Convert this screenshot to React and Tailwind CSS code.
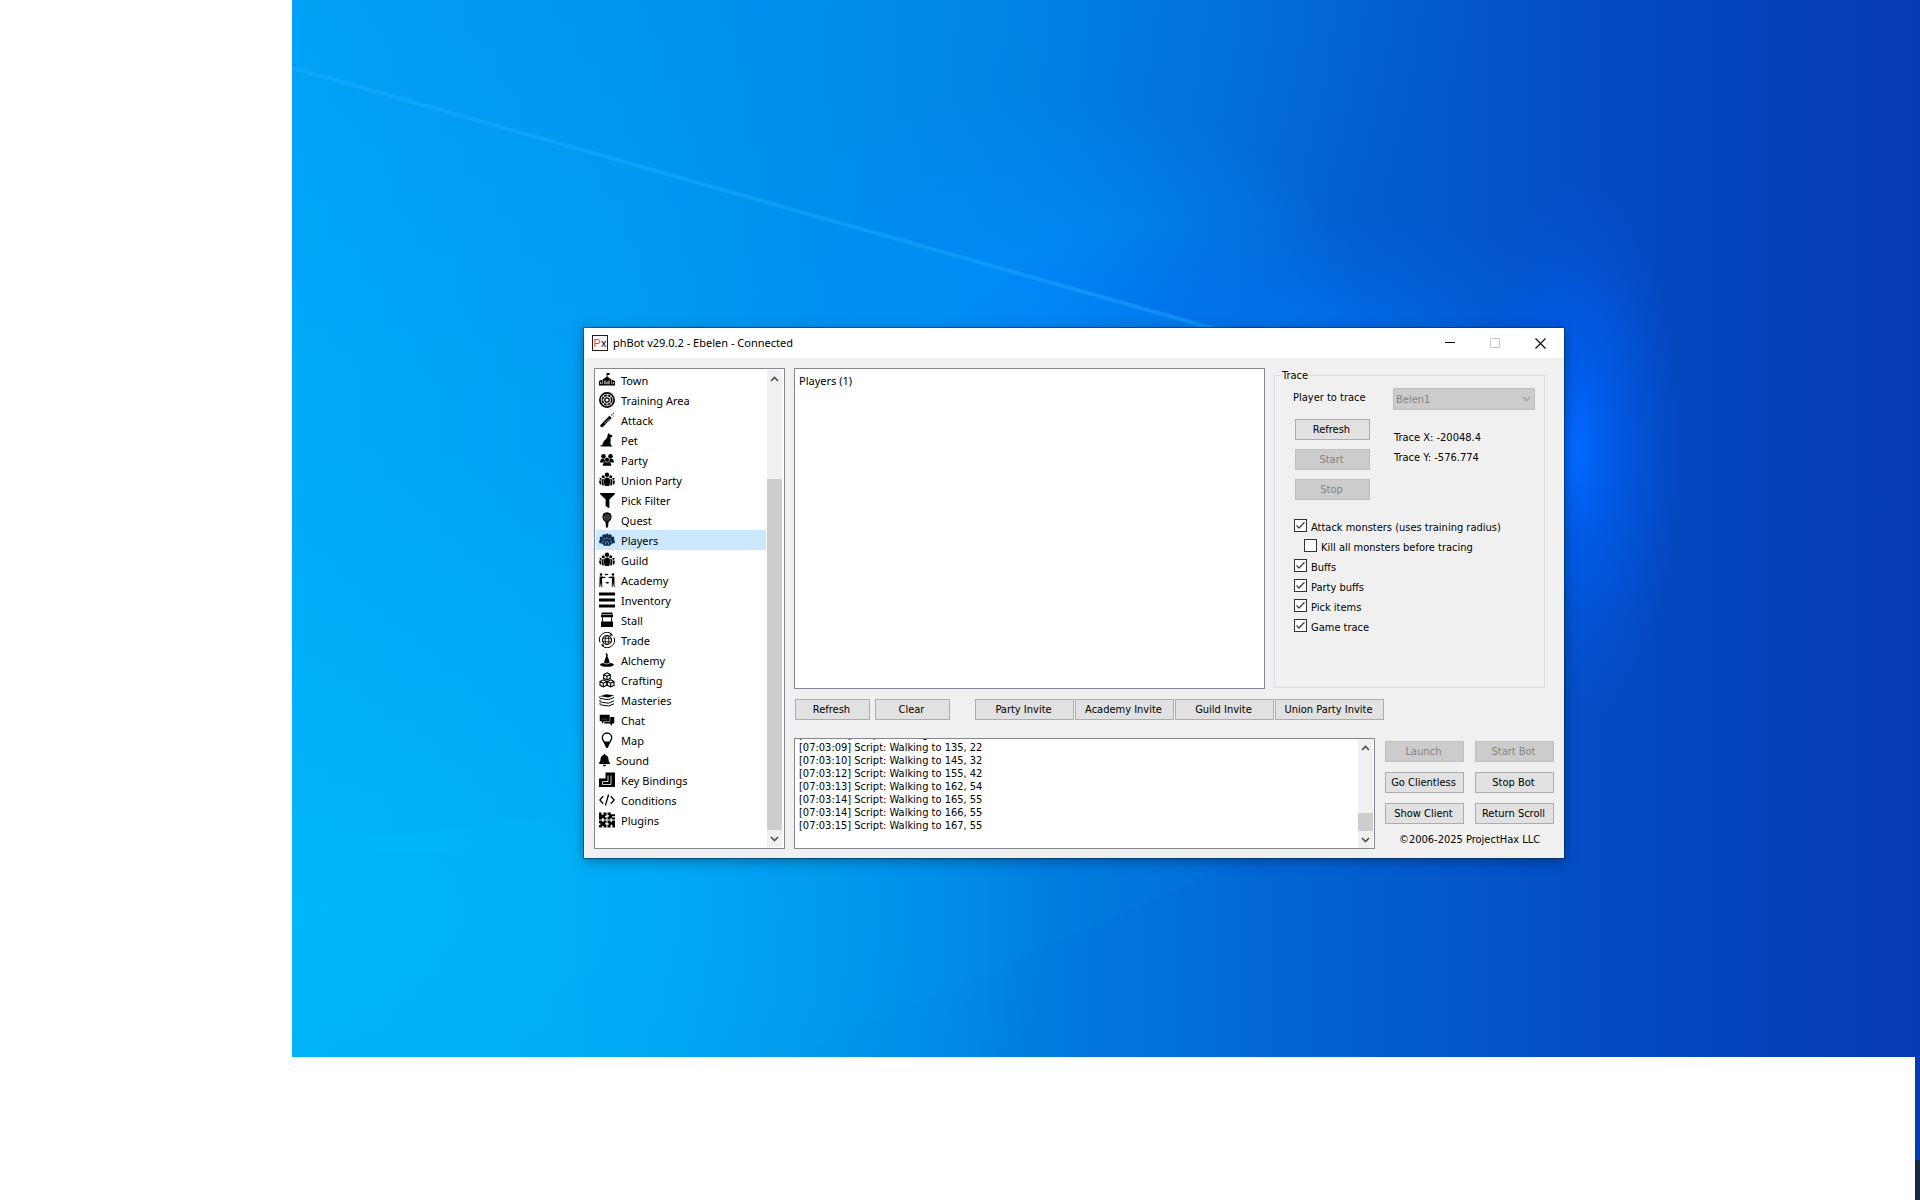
import React from 'react';
import { GiTalk } from 'react-icons/gi';
import { FaBell, FaFilter } from 'react-icons/fa';

const Svg = ({ children }) => (
  <svg viewBox="0 0 16 16" width="16" height="16" fill="currentColor">{children}</svg>
);

const Town = () => (
  <Svg>
    <path d="M7.600 1h3v2H8.500v1.800L12 7.200V13H4V7.200l3.600-2.400zM0 9 3.500 7.500V13H0zM12.500 7.500 16 9v4h-3.500z" />
    <path d="M5.500 8.500h1V13h-1zM9.500 8.500h1V13h-1zM7.600 9.500h.9V13h-.9zM1.300 10h.9v2h-.9zM13.800 10h.9v2h-.9z" fill="#fff" />
    <path d="M0 12.200h16v1.300H0z" />
  </Svg>
);
const Training = () => (
  <Svg>
    <circle cx="8" cy="8" r="7.100" fill="none" stroke="currentColor" strokeWidth="1.700" />
    <circle cx="8" cy="8" r="4.700" fill="none" stroke="currentColor" strokeWidth="1.700" strokeDasharray="3 .7" />
    <circle cx="8" cy="8" r="2.200" fill="none" stroke="currentColor" strokeWidth="1.300" />
  </Svg>
);
const Attack = () => (
  <Svg>
    <path d="M1.200 13.200 10.400 3.800l2.400 2.300-9.300 9.200q-2.600.4-2.300-2.100z" />
    <path d="m9.800 6.200 1.200 1.100-5 5-1-1z" fill="#fff" opacity=".35" />
    <path d="M12.300 2.300h1.200v1.200h-1.200zM14 .8h1v1h-1zM14.200 3.800h.8v.8h-.8z" />
  </Svg>
);
const Pet = () => (
  <Svg>
    <path d="M8.600 3 9.500.9l1 1.400 3 1.200-.4 1.500-1.700.4.400 3.300-.5 1.300.7 3.500h1.200v1H2.500q-1.600-.2-1.300-1.200 2 .5 2.300-1 .6-3.600 3.600-5.300Q8.600 5 8.600 3z" />
  </Svg>
);
const Party = () => (
  <Svg>
    <circle cx="4.500" cy="4.200" r="2.300" /><circle cx="11.500" cy="4.200" r="2.300" />
    <path d="M1 10.500q.2-4 3.500-4h7q3.300 0 3.500 4z" />
    <path d="M3.600 13.800Q4 10.400 6.400 10h3.200q2.400.4 2.800 3.800z" />
    <circle cx="8" cy="7.800" r="2.500" stroke="#fff" strokeWidth=".6" />
  </Svg>
);
const Union = () => (
  <Svg>
    <circle cx="8" cy="2.800" r="2.200" /><circle cx="4.300" cy="4.800" r="1.500" /><circle cx="11.700" cy="4.800" r="1.500" />
    <circle cx="1.600" cy="6.800" r="1.100" /><circle cx="14.400" cy="6.800" r="1.100" />
    <path d="M5.400 6.500Q8 4.300 10.600 6.500l.5 4-.9 3.500H5.800l-.9-3.500zM2.800 7.500l2-.7-.3 3.500.4 3.200H3.200zM13.200 7.500l-2-.7.3 3.500-.4 3.200h1.700zM0 9q1-1.200 2.200-.6l.3 4.200H.8zM16 9q-1-1.200-2.200-.6l-.3 4.200h1.700z" />
  </Svg>
);
const Quest = () => (
  <Svg>
    <path d="M8 .3q4.600.3 4.600 4.700 0 3-3.100 5.300L9 15.500H7l-.5-5.200Q3.400 8 3.400 5 3.400.6 8 .3z" />
    <path d="M7 2v7M9 2v7M5.200 3.500v3.800M10.800 3.500v3.800" stroke="#fff" strokeWidth=".6" opacity=".7" />
  </Svg>
);
const Players = () => (
  <Svg>
    <circle cx="5" cy="4" r="1.800" /><circle cx="8" cy="3.400" r="1.800" /><circle cx="11" cy="4" r="1.800" />
    <circle cx="2.300" cy="6" r="1.600" /><circle cx="13.700" cy="6" r="1.600" />
    <path d="M0 10.800Q.3 6.500 3 5.200L8 4l5 1.200q2.700 1.300 3 5.600L12.500 12 11 13.800H5L3.500 12z" />
    <path d="M4.200 6.600q1.400-.8 1.900 1M11.800 6.600q-1.400-.8-1.900 1M7 6.300q1-.7 2 0M3.300 11.300Q3.500 8.800 5 8.600M12.700 11.300Q12.500 8.800 11 8.600M6.200 12.500q0-3 1.800-3t1.800 3" stroke="#cce8ff" strokeWidth=".5" fill="none" />
  </Svg>
);
const Academy = () => (
  <Svg>
    <circle cx="2" cy="2.500" r="1.300" /><circle cx="14" cy="2.500" r="1.300" />
    <path d="M.6 4.400h2.400l3.400.5v1l-3.400.3.300 8.800H2.500L2 10.500 1.200 15H.4zM15.400 4.400H13l-3.400.5v1l3.400.3-.3 8.800h.8l.5-4.500.8 4.500h.8z" />
    <path d="M5.600 2.500 7.400 1.200V2h1.800v1H7.400v.8zM10.200 10.800l-1.800 1.300v-.8H6.600v-1h1.800v-.8z" />
  </Svg>
);
const Inventory = () => (
  <Svg><path d="M0 .5h16v3H0zM0 6.500h16v3H0zM0 12.500h16v3H0z" /></Svg>
);
const Stall = () => (
  <Svg>
    <path d="M3 .5h10l1 2v2.800H2V2.500zM2 9.500h12V15H2z" />
    <path d="M3.500 5.300v4.500M12.500 5.300v4.500" stroke="currentColor" strokeWidth=".9" />
    <path d="M2.500 2.500h11" stroke="#fff" strokeWidth=".6" />
  </Svg>
);
const Trade = () => (
  <Svg>
    <g fill="none" stroke="currentColor">
      <circle cx="8" cy="8" r="4.500" strokeWidth="1.200" />
      <ellipse cx="8" cy="8" rx="1.900" ry="4.500" strokeWidth=".9" />
      <path d="M4 6.200h8M4 9.800h8" strokeWidth=".9" />
      <path d="M1 10.500A7.400 7.400 0 0 1 12.500 2M15 5.500A7.400 7.400 0 0 1 3.500 14" strokeWidth="1" />
    </g>
    <path d="m11.600.8 2.600 2.700-3.200.2zM4.400 15.200l-2.600-2.700 3.200-.2z" />
  </Svg>
);
const Alchemy = () => (
  <Svg>
    <path d="M6.600.5 8.800 2.600 8.600 4.800l1.200 2.400.9 3.800q4 .3 4.200 1.400-.4 2.200-6.900 2.400Q1.300 14.600 1 12.400q.3-1 3.800-1.400L6 7.200 7.200 4z" />
    <path d="M4.800 11.200q3 1.500 5.900 0" stroke="#fff" strokeWidth=".7" fill="none" />
  </Svg>
);
const Crafting = () => (
  <Svg>
    <path d="M8 .8 11.300 2.500v3.800L8 8 4.700 6.300V2.500zM4.300 7.800l3.400 1.700v3.800L4.300 15 1 13.300V9.500zM11.700 7.800 15 9.500v3.800L11.700 15l-3.400-1.700V9.500zM4.700 2.500 8 4.200l3.300-1.700M8 4.200V8M1 9.500l3.300 1.700 3.400-1.700M4.300 11.200V15M8.300 9.500l3.400 1.700L15 9.500M11.700 11.200V15" fill="none" stroke="currentColor" strokeWidth="1.100" />
  </Svg>
);
const Masteries = () => (
  <Svg>
    <path d="M1 4.200 7 2.300l8 1-5.500 2.300z" />
    <path d="M1 4.200q-.8 1.500.2 2.300l8.300 1.200L15 5.400M1.200 7.800q-.8 1.500.2 2.200l8.100 1.200L15 8.800M1.200 11q-.8 1.400.2 1.800l8.100 1.200 5.500-2.200" fill="none" stroke="currentColor" strokeWidth="1" />
  </Svg>
);
const MapPin = () => (
  <Svg>
    <path d="M8 1a4.700 4.700 0 0 1 4.700 4.700c0 2.600-2.500 4.600-4.200 9.300h-1C5.800 10.300 3.300 8.300 3.300 5.700A4.700 4.700 0 0 1 8 1z" fill="none" stroke="currentColor" strokeWidth="1.300" />
    <path d="M4.800 9.500h6.400L8.600 15.200H7.400z" />
  </Svg>
);
const Keys = () => (
  <Svg>
    <path d="M6.500.500H16V15H0V6.500h6.500z" />
    <path d="M9 3.500v6H3.500v3h8.500v-9" fill="none" stroke="#fff" strokeWidth=".8" />
  </Svg>
);
const Conditions = () => (
  <Svg>
    <path d="M4.200 4.200.8 8l3.400 3.800M11.800 4.200 15.200 8l-3.400 3.800M9.600 2.500 6.400 13.500" fill="none" stroke="currentColor" strokeWidth="1.300" />
  </Svg>
);
const Plugins = () => (
  <Svg>
    <path d="M0 .5h2.500v2.300h2V.5h3v3.200H6v1.600h1.500v2.200H4.800V6.300H3v1.200H0zM8.500.5h3.200v1.700H16v2H13v1.300h3v2h-3V6.300h-1.500v1.200h-3V4.800h1.300V3H8.500zM0 8.500h3v1.300h1.600V8.500h2.900v2.300H6.300v1.800h1.200v2.900h-3v-1.400h-1.600v1.400H0v-2.400h1.300v-1.800H0zM8.500 8.500h3v1.200h1.600V8.500H16v7h-2.600v-2.700h-1.800v2.700H8.500v-2.800h1.300v-1.500H8.500z" />
  </Svg>
);

const items = [
  ['Town', <Town />], ['Training Area', <Training />], ['Attack', <Attack />], ['Pet', <Pet />],
  ['Party', <Party />], ['Union Party', <Union />], ['Pick Filter', <FaFilter size={15} />],
  ['Quest', <Quest />], ['Players', <Players />], ['Guild', <Union />],
  ['Academy', <Academy />], ['Inventory', <Inventory />], ['Stall', <Stall />],
  ['Trade', <Trade />], ['Alchemy', <Alchemy />], ['Crafting', <Crafting />],
  ['Masteries', <Masteries />], ['Chat', <GiTalk size={17} />], ['Map', <MapPin />],
  ['Sound', <FaBell size={14} />], ['Key Bindings', <Keys />], ['Conditions', <Conditions />],
  ['Plugins', <Plugins />],
];

const log = [
  '[07:03:07] Script: Walking to 125, 12',
  '[07:03:09] Script: Walking to 135, 22',
  '[07:03:10] Script: Walking to 145, 32',
  '[07:03:12] Script: Walking to 155, 42',
  '[07:03:13] Script: Walking to 162, 54',
  '[07:03:14] Script: Walking to 165, 55',
  '[07:03:14] Script: Walking to 166, 55',
  '[07:03:15] Script: Walking to 167, 55',
];

function Button({ children, className = '', disabled }) {
  return (
    <button
      type="button"
      disabled={disabled}
      className={`h-[21px] whitespace-nowrap border border-[#adadad] bg-[#e1e1e1] pr-0.5 pt-px text-center leading-[18px] text-black disabled:border-[#bfbfbf] disabled:bg-[#cccccc] disabled:text-[#838383] ${className}`}
    >
      {children}
    </button>
  );
}

function Check({ label, checked, className = '' }) {
  return (
    <label className={`flex h-5 items-center gap-1 whitespace-nowrap ${className}`}>
      <span className="grid pb-0.5">
        <input
          type="checkbox"
          defaultChecked={checked}
          className="peer col-start-1 row-start-1 h-[13px] w-[13px] appearance-none border border-[#333] bg-white"
        />
        <svg viewBox="0 0 13 13" width="13" height="13" className="pointer-events-none invisible col-start-1 row-start-1 peer-checked:visible">
          <path d="M2.500 6.500 5 9l5.500-5.800" fill="none" stroke="#444" strokeWidth="1.300" />
        </svg>
      </span>
      <span className="pt-0.5">{label}</span>
    </label>
  );
}

function Chevron({ up, className = 'text-[#505050]' }) {
  return (
    <svg viewBox="0 0 9 6" width="9" height="6" className={className}>
      <path d={up ? 'M1 5 4.500 1.500 8 5' : 'M1 1 4.500 4.500 8 1'} fill="none" stroke="currentColor" strokeWidth="1.700" />
    </svg>
  );
}

function ScrollBar({ before, thumb, after }) {
  return (
    <div className="flex w-[15px] shrink-0 flex-col bg-[#f0f0f0]">
      <button type="button" aria-label="Scroll up" className="grid h-[17px] shrink-0 place-items-center"><Chevron up /></button>
      <div className={before} />
      <div className={`bg-[#cdcdcd] ${thumb}`} />
      <div className={after} />
      <button type="button" aria-label="Scroll down" className="grid h-[17px] shrink-0 place-items-center"><Chevron /></button>
    </div>
  );
}

function Wallpaper() {
  return (
    <svg viewBox="0 0 1628 1057" preserveAspectRatio="none" className="absolute inset-0 h-full w-full">
      <defs>
        <linearGradient id="base" x1="0" y1="0" x2="1" y2="0">
          <stop offset="0" stopColor="#00aaf8" />
          <stop offset=".2" stopColor="#009ef3" />
          <stop offset=".4" stopColor="#0086e4" />
          <stop offset=".6" stopColor="#0266d4" />
          <stop offset=".8" stopColor="#044cc4" />
          <stop offset="1" stopColor="#053ab2" />
        </linearGradient>
        <radialGradient id="cyan" cx=".02" cy=".86" r=".45">
          <stop offset="0" stopColor="#00b9fb" stopOpacity=".85" />
          <stop offset="1" stopColor="#00b9fb" stopOpacity="0" />
        </radialGradient>
        <radialGradient id="top" cx=".25" cy="-.1" r=".5">
          <stop offset="0" stopColor="#008cec" stopOpacity=".6" />
          <stop offset="1" stopColor="#008cec" stopOpacity="0" />
        </radialGradient>
        <radialGradient id="mid" cx=".46" cy=".29" r=".2">
          <stop offset="0" stopColor="#008eff" stopOpacity=".8" />
          <stop offset="1" stopColor="#008eff" stopOpacity="0" />
        </radialGradient>
        <radialGradient id="glow" gradientUnits="userSpaceOnUse" cx="1284" cy="450" r="270" gradientTransform="translate(1284 0) scale(.4 1) translate(-1284 0)">
          <stop offset="0" stopColor="#006aff" />
          <stop offset=".35" stopColor="#0060f2" stopOpacity=".7" />
          <stop offset="1" stopColor="#0055dd" stopOpacity="0" />
        </radialGradient>
        <radialGradient id="halo" gradientUnits="userSpaceOnUse" cx="1000" cy="340" r="360" gradientTransform="translate(0 220) scale(1 .35)">
          <stop offset="0" stopColor="#0072f2" stopOpacity=".8" />
          <stop offset="1" stopColor="#0062e4" stopOpacity="0" />
        </radialGradient>
      </defs>
      <rect width="1628" height="1057" fill="url(#base)" />
      <rect width="1628" height="1057" fill="url(#cyan)" />
      <rect width="1628" height="1057" fill="url(#top)" />
      <rect width="1628" height="1057" fill="url(#mid)" />
      <rect width="1628" height="1057" fill="url(#halo)" />
      <rect width="1628" height="1057" fill="url(#glow)" />
      <path d="M0 68 920 328H0z" fill="#00a8ff" opacity=".12" />
      <path d="M0 68 920 328" stroke="#22b0ff" strokeWidth="4" opacity=".4" />
      <path d="M0 848 292 812V1057H0z" fill="#00c8ff" opacity=".08" />
      <path d="M500 1057 960 858H292L0 848V1057z" fill="#00b4ff" opacity=".05" />
    </svg>
  );
}

export default function App() {
  return (
    <div className="grid h-screen min-h-[1000px] grid-cols-[292px_1fr] grid-rows-[1fr_143px] bg-white font-['DejaVu_Sans_Condensed','DejaVu_Sans',sans-serif] text-[11px] leading-[13px] text-black">
      <div />
      <main className="relative">
        <Wallpaper />
        <section className="absolute left-[292px] right-[356px] top-[328px] min-w-[860px] bg-[#f0f0f0] shadow-[0_0_0_1px_rgba(0,40,90,0.55),0_3px_12px_rgba(0,0,0,0.35)]">
          <header className="flex h-[30px] items-center bg-white pl-2 font-['Noto_Sans',sans-serif]">
            <span className="grid h-4 w-4 place-items-center border border-[#2a1a1a] font-['Liberation_Sans',sans-serif] leading-3">
              <span><span className="text-[#e0404c]">P</span>x</span>
            </span>
            <h1 className="flex-1 pb-0.5 pl-[5px]">phBot v29.0.2 - Ebelen - Connected</h1>
            <button type="button" aria-label="Minimize" className="grid h-[30px] w-[45px] place-items-center">
              <svg width="10" height="10"><path d="M0 4.500h10" stroke="#000" /></svg>
            </button>
            <button type="button" aria-label="Maximize" disabled className="grid h-[30px] w-[45px] place-items-center">
              <svg width="10" height="10"><path d="M.5.500h9v9h-9z" fill="none" stroke="#c8c8c8" /></svg>
            </button>
            <button type="button" aria-label="Close" className="grid h-[30px] w-[47px] place-items-center">
              <svg width="11" height="11"><path d="m.5.500 10 10M10.500.500l-10 10" stroke="#000" strokeWidth="1.100" /></svg>
            </button>
          </header>
          <div className="flex gap-[9px] px-2.5 pb-[9px] pt-2.5">
            <nav className="flex w-[191px] shrink-0 border border-[#828790] bg-white p-px pr-0.5">
              <ul className="flex-1 font-['Noto_Sans',sans-serif]">
                {items.map(([name, icon]) => (
                  <li key={name}>
                    <a
                      href="#"
                      className={`mr-px flex h-5 items-center pl-[3px] ${name === 'Players' ? 'bg-[#cce8ff] text-[#0b2d52]' : ''}`}
                    >
                      <span className={`flex h-4 shrink-0 items-center justify-center ${name === 'Sound' ? 'w-[11px]' : 'w-4'}`}>{icon}</span>
                      <span className="pl-1.5 text-black">{name}</span>
                    </a>
                  </li>
                ))}
              </ul>
              <ScrollBar before="h-[92px]" thumb="flex-1" after="h-0" />
            </nav>

            <div className="flex min-w-0 flex-1 flex-col">
              <div className="flex gap-[9px] pr-[9px]">
                <div className="h-[321px] flex-1 border border-[#828790] bg-white px-1 py-[5px] font-['Noto_Sans',sans-serif]">
                  Players (1)
                </div>
                <fieldset className="h-[320px] w-[271px] border border-[#dcdcdc] px-[18px]">
                  <legend className="-ml-3 px-px pt-px leading-[13px]">Trace</legend>
                  <div className="flex justify-between">
                    <div className="flex w-[77px] flex-col pt-[9px]">
                      <label htmlFor="player" className="whitespace-nowrap">Player to trace</label>
                      <div className="flex flex-col gap-[9px] pl-0.5 pt-[15px]">
                        <Button>Refresh</Button>
                        <Button disabled>Start</Button>
                        <Button disabled>Stop</Button>
                      </div>
                    </div>
                    <div className="-mr-[9px] w-[142px] pt-1.5">
                      <div className="grid items-center">
                        <select id="player" disabled className="col-start-1 row-start-1 h-[22px] w-full appearance-none border border-[#bfbfbf] bg-[#cccccc] px-0.5 pt-px text-[#838383]">
                          <option>Belen1</option>
                        </select>
                        <Chevron className="pointer-events-none col-start-1 row-start-1 mr-1 justify-self-end text-[#a5a5a5]" />
                      </div>
                      <p className="pl-px pt-[21px]">Trace X: -20048.4</p>
                      <p className="pl-px pt-[7px]">Trace Y: -576.774</p>
                    </div>
                  </div>
                  <div className="pl-px pt-4">
                    <Check label="Attack monsters (uses training radius)" checked />
                    <Check label="Kill all monsters before tracing" className="pl-2.5" />
                    <Check label="Buffs" checked />
                    <Check label="Party buffs" checked />
                    <Check label="Pick items" checked />
                    <Check label="Game trace" checked />
                  </div>
                </fieldset>
              </div>

              <div className="flex pl-px pt-2.5">
                <Button className="w-[75px]">Refresh</Button>
                <Button className="ml-[5px] w-[75px]">Clear</Button>
                <div className="ml-[25px] flex gap-px">
                  <Button className="w-[99px]">Party Invite</Button>
                  <Button className="w-[99px]">Academy Invite</Button>
                  <Button className="w-[99px]">Guild Invite</Button>
                  <Button className="w-[109px]">Union Party Invite</Button>
                </div>
              </div>

              <div className="flex gap-2.5 pt-[18px]">
                <div className="flex h-[111px] min-w-0 flex-1 border border-[#828790] bg-white pr-px">
                  <div className="flex flex-1 flex-col justify-end overflow-hidden pb-4 pl-1">
                    {log.map((line) => (
                      <p key={line} className="h-[13px] shrink-0 whitespace-nowrap">{line}</p>
                    ))}
                  </div>
                  <ScrollBar before="flex-1" thumb="h-[18px]" after="h-0" />
                </div>
                <div className="w-[169px] pt-[3px]">
                  <div className="grid grid-cols-2 gap-x-[11px] gap-y-2.5">
                    <Button disabled>Launch</Button>
                    <Button disabled>Start Bot</Button>
                    <Button>Go Clientless</Button>
                    <Button>Stop Bot</Button>
                    <Button>Show Client</Button>
                    <Button>Return Scroll</Button>
                  </div>
                  <p className="whitespace-nowrap pl-3.5 pt-[9px]">©2006-2025 ProjectHax LLC</p>
                </div>
              </div>
            </div>
          </div>
        </section>
      </main>
      <div />
      <div className="flex justify-end">
        <div className="flex w-[5px] flex-col bg-[#1a2740]">
          <div className="h-[103px] bg-[#053eb4]" />
        </div>
      </div>
    </div>
  );
}
